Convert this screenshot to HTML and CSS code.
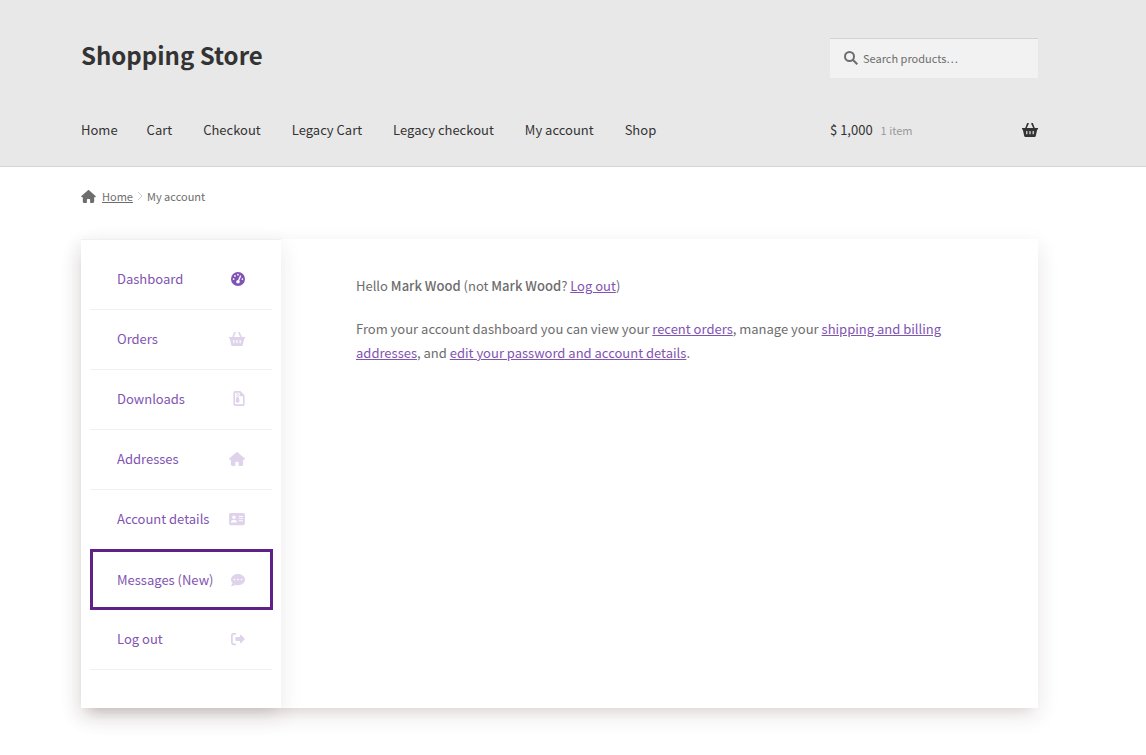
FILE: index.html
```html
<!DOCTYPE html>
<html lang="en">
<head>
<meta charset="UTF-8">
<meta name="viewport" content="width=device-width, initial-scale=1.0">
<title>My account - Shopping Store</title>
<link rel="stylesheet" href="styles.css">
</head>
<body>
<header class="site-header">
  <div class="container header-grid">
    <a class="site-title" href="#">Shopping Store</a>
    <form class="search" role="search">
      <svg class="search-icon" viewBox="0 0 14 14" aria-hidden="true"><circle cx="5.500" cy="5.500" r="4.500"/><path d="M9 9l4.300 4.300"/></svg>
      <input type="search" placeholder="Search products…" aria-label="Search products">
    </form>
    <nav class="main-nav" aria-label="Primary">
      <a href="#">Home</a>
      <a href="#">Cart</a>
      <a href="#">Checkout</a>
      <a href="#">Legacy Cart</a>
      <a href="#">Legacy checkout</a>
      <a href="#">My account</a>
      <a href="#">Shop</a>
    </nav>
    <a class="cart" href="#">
      <span>$ 1,000</span>
      <span class="count">1 item</span>
      <svg class="cart-icon" viewBox="0 0 16 14" aria-hidden="true"><use href="#basket"/></svg>
    </a>
  </div>
</header>

<div class="container">
  <nav class="breadcrumb" aria-label="Breadcrumb">
    <svg class="home-icon" viewBox="0 0 576 512" aria-hidden="true"><use href="#house"/></svg>
    <a href="#">Home</a>
    <svg class="chevron" viewBox="0 0 6 10" aria-hidden="true"><path d="M1 1l4 4-4 4"/></svg>
    <span>My account</span>
  </nav>

  <main class="account">
    <nav class="account-nav" aria-label="Account">
      <ul>
        <li class="active"><a href="#">Dashboard
          <svg viewBox="0 0 512 512" aria-hidden="true"><path fill-rule="evenodd" d="M0 256a256 256 0 1 1 512 0A256 256 0 1 1 0 256zM288 96a32 32 0 1 0-64 0 32 32 0 1 0 64 0zM256 416c35.300 0 64-28.700 64-64 0-17.400-6.900-33.100-18.100-44.600L366 161.700c5.300-12.100-.2-26.300-12.300-31.600s-26.300.2-31.600 12.300L257.900 288H256c-35.300 0-64 28.700-64 64s28.700 64 64 64zM176 144a32 32 0 1 0-64 0 32 32 0 1 0 64 0zM96 288a32 32 0 1 0 0-64 32 32 0 1 0 0 64zM448 256a32 32 0 1 0-64 0 32 32 0 1 0 64 0z"/></svg></a></li>
        <li><a href="#">Orders
          <svg class="wide" viewBox="0 0 16 14" aria-hidden="true"><path id="basket" fill-rule="evenodd" d="M5.200 0h1.500v1L4.800 5h6.400L9.300 1V0h1.500l2 5H16v1.500h-.8l-1.300 6c-.2 1-.8 1.500-1.700 1.500H3.800c-.9 0-1.500-.5-1.700-1.500l-1.300-6H0V5h3.200zM4.200 8v3.300h1.200V8zM7.400 8v3.300h1.200V8zM10.600 8v3.300h1.200V8z"/></svg></a></li>
        <li><a href="#">Downloads
          <svg class="narrow" viewBox="0 0 384 512" aria-hidden="true"><path fill-rule="evenodd" d="M64 0h176l144 144v304c0 35-29 64-64 64H64c-35 0-64-29-64-64V64C0 29 29 0 64 0zM56 56v400h272V176H216V56zM96 64h48v32H96zM144 96h48v32h-48zM96 128h48v32H96zM144 160h48v32h-48zM112 208h64l32 110c12 48-20 82-64 82s-76-34-64-82z"/></svg></a></li>
        <li><a href="#">Addresses
          <svg class="wide" viewBox="0 0 576 512" aria-hidden="true"><path id="house" d="M575.800 255.500c0 18-15 32.100-32 32.100h-32l.7 160.200c0 35-22 64.200-57 64.200H376c-22 0-24-18-24-40v-88c0-17.700-14.300-32-32-32h-64c-17.700 0-32 14.300-32 32v88c0 22-2 40-24 40h-72c-35 0-64-29-64-64V287.600H32c-18 0-32-14-32-32.100 0-9 3-17 10-24L266.400 8c7-7 15-8 22-8s15 2 21 7L564.800 231.500c8 7 12 15 11 24z"/></svg></a></li>
        <li><a href="#">Account details
          <svg class="wide" viewBox="0 0 576 512" aria-hidden="true"><path fill-rule="evenodd" d="M56 32h464c31 0 56 25 56 56v336c0 31-25 56-56 56H56c-31 0-56-25-56-56V88c0-31 25-56 56-56zM176 128a64 64 0 1 0 0 128 64 64 0 1 0 0-128zM64 384h224c0-60-36-96-80-96h-64c-44 0-80 36-80 96zM352 144v36h160v-36zM352 224v36h160v-36zM352 304v36h160v-36z"/></svg></a></li>
        <li class="new"><a href="#">Messages (New)
          <svg viewBox="0 0 512 512" aria-hidden="true"><path d="M256 32C114.600 32 0 125.100 0 240c0 49.600 21.400 95 57 130.700C44.500 421.100 2.700 466 2.200 466.500c-2.200 2.300-2.800 5.700-1.500 8.700S4.800 480 8 480c66.300 0 116-31.800 140.600-51.400 32.700 12.300 69 19.400 107.400 19.400 141.400 0 256-93.100 256-208S397.400 32 256 32zM128 272c-17.700 0-32-14.300-32-32s14.300-32 32-32 32 14.300 32 32-14.300 32-32 32zm128 0c-17.700 0-32-14.300-32-32s14.300-32 32-32 32 14.300 32 32-14.300 32-32 32zm128 0c-17.700 0-32-14.300-32-32s14.300-32 32-32 32 14.300 32 32-14.300 32-32 32z"/></svg></a></li>
        <li><a href="#">Log out
          <svg viewBox="0 0 512 512" aria-hidden="true"><path d="M160 32H96C43 32 0 75 0 128v256c0 53 43 96 96 96h64c18 0 32-14 32-32s-14-32-32-32H96c-18 0-32-14-32-32V128c0-18 14-32 32-32h64c18 0 32-14 32-32s-14-32-32-32zM497 273L369 401c-15 15-41 4.500-41-17v-56H192c-18 0-32-14-32-32v-80c0-18 14-32 32-32h136v-56c0-21 26-32 41-17l128 128c9 10 9 25 0 34z"/></svg></a></li>
      </ul>
    </nav>
    <section class="account-content">
      <p>Hello <strong>Mark Wood</strong> (not <strong>Mark Wood</strong>? <a href="#">Log out</a>)</p>
      <p>From your account dashboard you can view your <a href="#">recent orders</a>, manage your <a href="#">shipping and billing addresses</a>, and <a href="#">edit your password and account details</a>.</p>
    </section>
  </main>
</div>
</body>
</html>
```
FILE: styles.css
```css
* {
  box-sizing: border-box;
}
body {
  margin: 0;
  background: #fff;
  color: #6d6d6d;
  font-family: "Noto Sans CJK SC", "Noto Sans", sans-serif;
  font-size: 13px;
  line-height: 24px;
}
svg {
  fill: currentColor;
}
.container {
  padding: 0 108px 0 81px;
}
.site-header {
  background: #e8e8e8;
  border-bottom: 1px solid #d5d5d5;
  padding: 38px 0 24px;
}
.header-grid {
  display: grid;
  grid-template-columns: 1fr 208px;
  row-gap: 40px;
}
.site-title {
  color: #333;
  font-size: 24px;
  font-weight: 700;
  line-height: 34px;
  text-decoration: none;
}
.search {
  display: flex;
  align-items: center;
  gap: 5px;
  height: 40px;
  padding: 0 14px 2px;
  background: #f2f2f2;
  border-top: 1px solid #d3d3d3;
}
.search-icon {
  width: 14px;
  height: 14px;
  flex: none;
  fill: none;
  stroke: currentColor;
  stroke-width: 2;
}
.search input {
  width: 100%;
  min-width: 0;
  padding: 0;
  border: 0;
  outline: 0;
  background: none;
  color: #6d6d6d;
  font-family: inherit;
  font-size: 11px;
}
.search input::placeholder {
  color: #6d6d6d;
  opacity: 1;
}
.main-nav {
  display: flex;
  gap: 31px;
}
.main-nav a:first-child {
  margin-right: -2px;
}
.main-nav a,
.cart {
  color: #333;
  text-decoration: none;
  white-space: nowrap;
}
.cart {
  display: flex;
  align-items: center;
}
.count {
  margin-left: 8px;
  color: #999;
  font-size: 11px;
}
.cart-icon {
  width: 16px;
  height: 14px;
  margin-left: auto;
}
.breadcrumb {
  display: flex;
  align-items: center;
  padding: 17px 0 31px;
  font-size: 11px;
}
.breadcrumb a {
  color: #6d6d6d;
}
.home-icon {
  width: 15px;
  height: 13px;
  margin-right: 6px;
}
.chevron {
  width: 6px;
  height: 10px;
  margin: 0 4px;
  fill: none;
  stroke: #ccc;
}
.account {
  display: grid;
  grid-template-columns: 200px 1fr;
  margin-bottom: 40px;
  box-shadow: 0 8px 20px rgba(70, 35, 35, 0.12), 0 10px 12px -10px rgba(70, 35, 35, 0.12);
}
.account-nav {
  padding: 10px 9px 38px;
  background: #fff;
  border-top: 1px solid #f0f0f0;
  box-shadow: 0 8px 20px rgba(70, 35, 35, 0.1), 0 10px 12px -10px rgba(70, 35, 35, 0.1);
}
.account-nav ul {
  margin: 0;
  padding: 0;
  list-style: none;
}
.account-nav li {
  height: 60px;
  border-bottom: 1px solid #f0f0f0;
}
.account-nav a {
  display: flex;
  align-items: center;
  justify-content: space-between;
  height: 100%;
  padding: 0 27px 2px;
  color: #7f54b3;
  text-decoration: none;
  white-space: nowrap;
}
.account-nav svg {
  width: 14px;
  height: 14px;
  opacity: 0.25;
}
.account-nav .wide {
  width: 16px;
}
.account-nav .narrow {
  width: 12px;
  height: 15px;
}
.account-nav .active svg {
  opacity: 1;
}
.account-nav .new {
  height: 61px;
  margin: -1px -1px 0 0;
  border: 3px solid #5f2088;
}
.account-nav .new a {
  padding: 0 25px 0 24px;
}
.account-content {
  padding: 35px 75px;
}
.account-content p {
  margin: 0 0 19px;
}
.account-content strong {
  font-weight: 500;
}
.account-content a {
  color: #7f54b3;
}
```
